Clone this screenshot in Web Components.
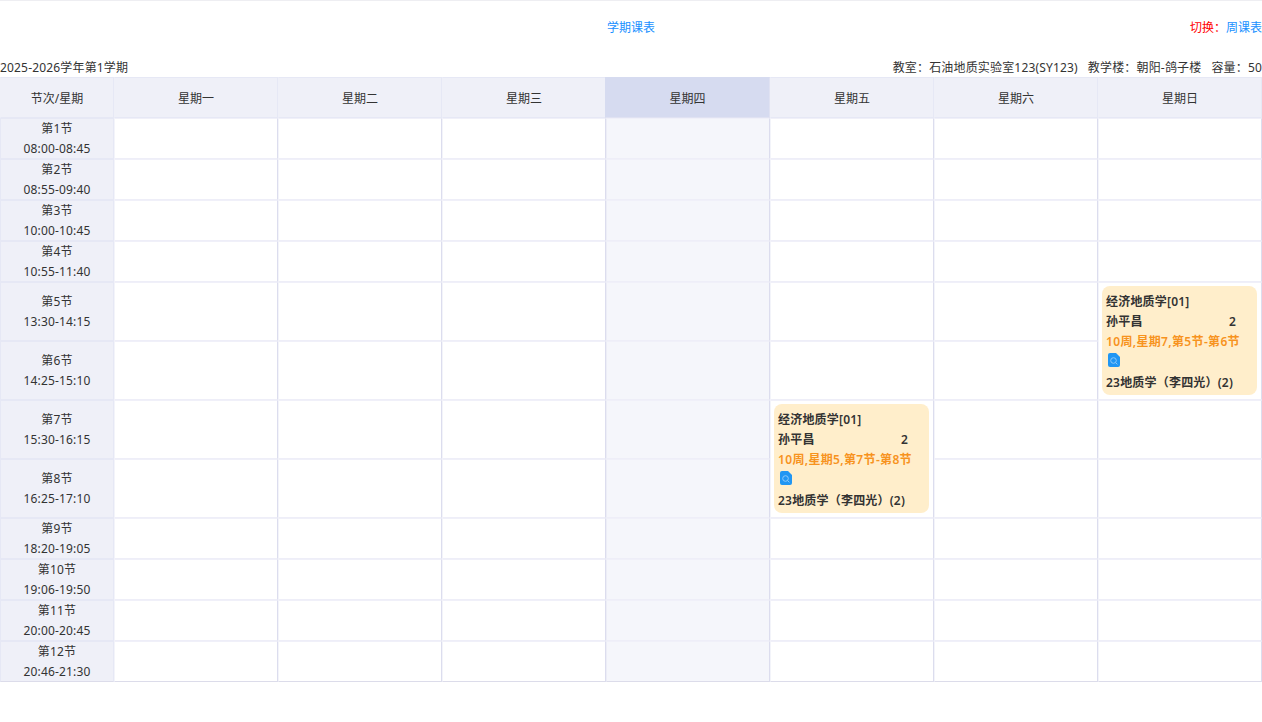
<!DOCTYPE html>
<html lang="zh">
<head>
<meta charset="utf-8">
<title>学期课表</title>
<style>
    html, body { margin: 0; padding: 0; background: #fff; }
    body { font: 12px/20px "Noto Sans", "Noto Sans CJK SC", sans-serif; color: #333; }
</style>
</head>
<body>
<term-page></term-page>
<script>
const SLOTS = [
    ['第1节', '08:00-08:45'], ['第2节', '08:55-09:40'], ['第3节', '10:00-10:45'], ['第4节', '10:55-11:40'],
    ['第5节', '13:30-14:15'], ['第6节', '14:25-15:10'], ['第7节', '15:30-16:15'], ['第8节', '16:25-17:10'],
    ['第9节', '18:20-19:05'], ['第10节', '19:06-19:50'], ['第11节', '20:00-20:45'], ['第12节', '20:46-21:30']
];
const DAYS = ['星期一', '星期二', '星期三', '星期四', '星期五', '星期六', '星期日'];
const TODAY = 4;
const COURSES = [
    { day: 5, from: 7, to: 8, week: '10周,星期5,第7节-第8节' },
    { day: 7, from: 5, to: 6, week: '10周,星期7,第5节-第6节' }
];

class TermHeader extends HTMLElement {
    connectedCallback() {
        this.attachShadow({ mode: 'open' });
        this.shadowRoot.innerHTML = `
            <style>
                :host { display: block; border-top: 1px solid #eeeef2; }
                .bar { display: grid; grid-template-columns: 1fr auto 1fr; height: 54px; align-items: center; color: #1890ff; }
                .switch { justify-self: end; }
                .switch span { color: #f00; }
                .info { display: flex; justify-content: space-between; box-sizing: border-box; height: 22px; padding-top: 4px; align-items: center; letter-spacing: .17px; }
                .info div span { margin-left: 10px; }
            </style>
            <div class="bar">
                <div></div>
                <div>学期课表</div>
                <div class="switch"><span>切换：</span>周课表</div>
            </div>
            <div class="info">
                <div>2025-2026学年第1学期</div>
                <div><span>教室：石油地质实验室123(SY123)</span><span>教学楼：朝阳-鸽子楼</span><span>容量：50</span></div>
            </div>
        `;
    }
}

class TimeGrid extends HTMLElement {
    connectedCallback() {
        this.attachShadow({ mode: 'open' });
        this.shadowRoot.innerHTML = `
            <style>
                :host { display: block; }
                .grid {
                    display: grid;
                    grid-template-columns: 114px repeat(7, 164px);
                    grid-template-rows: 41px repeat(4, 41px) repeat(4, 59px) repeat(4, 41px);
                }
            </style>
            <div class="grid"><slot></slot></div>
        `;
    }
}

class GridCell extends HTMLElement {
    connectedCallback() {
        this.attachShadow({ mode: 'open' });
        this.shadowRoot.innerHTML = `
            <style>
                :host {
                    display: flex;
                    box-sizing: border-box;
                    min-width: 0;
                    border-top: 1px solid #f0f0f9;
                    border-left: 1px solid #f3f4fa;
                    border-right: 1px solid #dcddee;
                    border-bottom: 1px solid #eeeef8;
                    background: #fff;
                }
                :host([kind="head"]), :host([kind="today-head"]) {
                    padding-top: 2px;
                    background: #eff0f8;
                    border-color: #e6e8f5;
                    border-left-color: transparent;
                    align-items: center;
                    justify-content: center;
                }
                :host([kind="today-head"]) { margin-left: -1px; background: #d6dbf0; border-color: #d6dbf0 #e0e2f2 #e0e2f2 #d6dbf0; }
                :host([kind="side"]) {
                    padding-top: 1px;
                    background: #eff0f8;
                    border-color: #e6e8f5;
                    flex-direction: column;
                    align-items: center;
                    justify-content: center;
                    text-align: center;
                    letter-spacing: .17px;
                }
                :host([kind="today"]) { background: #f5f6fb; border-left-color: #eceDf6; }
                :host([last]) { border-bottom-color: #dcdcea; }
            </style>
            <slot></slot>
        `;
    }
}

class CourseCard extends HTMLElement {
    connectedCallback() {
        const week = this.getAttribute('week');
        this.attachShadow({ mode: 'open' });
        this.shadowRoot.innerHTML = `
            <style>
                :host {
                    display: block;
                    flex: 1;
                    margin: 3px 4px 4px 3px;
                    padding: 6px 4px 2px;
                    border-radius: 8px;
                    background: #ffeecb;
                    color: #333;
                    font-weight: 600;
                    letter-spacing: .2px;
                }
                .row { display: flex; justify-content: space-between; padding-right: 17px; }
                .week { color: #f7931e; white-space: nowrap; letter-spacing: .34px; }
                .doc { height: 21px; display: flex; align-items: flex-start; padding: 1px 0 0 2px; box-sizing: border-box; }
                svg { display: block; }
            </style>
            <div>经济地质学[01]</div>
            <div class="row"><span>孙平昌</span><span>2</span></div>
            <div class="week">${week}</div>
            <div class="doc">
                <svg width="12" height="14" viewBox="0 0 12 14">
                    <path d="M2 0H8L12 4V12A2 2 0 0 1 10 14H2A2 2 0 0 1 0 12V2A2 2 0 0 1 2 0Z" fill="#2196f3"/>
                    <circle cx="5.5" cy="7.5" r="2.8" fill="none" stroke="#8cc9fa" stroke-width="1"/>
                    <path d="M7.6 9.6L9.4 11.4" stroke="#8cc9fa" stroke-width="1"/>
                </svg>
            </div>
            <div>23地质学（李四光）(2)</div>
        `;
    }
}

class TermPage extends HTMLElement {
    connectedCallback() {
        this.attachShadow({ mode: 'open' });
        const cell = (kind, col, row, span, html) =>
            `<grid-cell ${kind ? `kind="${kind}"` : ''} ${row === 13 ? 'last' : ''} style="grid-column:${col};grid-row:${row} / span ${span}">${html || ''}</grid-cell>`;

        let cells = cell('head', 1, 1, 1, '节次/星期');
        DAYS.forEach((d, i) => {
            cells += cell(i + 1 === TODAY ? 'today-head' : 'head', i + 2, 1, 1, d);
        });
        SLOTS.forEach((s, r) => {
            cells += cell('side', 1, r + 2, 1, `<div>${s[0]}</div><div>${s[1]}</div>`);
            DAYS.forEach((d, i) => {
                const day = i + 1, no = r + 1;
                const course = COURSES.find(c => c.day === day && no >= c.from && no <= c.to);
                if (course && no !== course.from) return;
                const span = course ? course.to - course.from + 1 : 1;
                const card = course ? `<course-card week="${course.week}"></course-card>` : '';
                cells += cell(day === TODAY ? 'today' : '', i + 2, r + 2, span, card);
            });
        });

        this.shadowRoot.innerHTML = `
            <style>
                :host { display: block; width: 1262px; }
            </style>
            <term-header></term-header>
            <time-grid>${cells}</time-grid>
        `;
    }
}

customElements.define('term-header', TermHeader);
customElements.define('time-grid', TimeGrid);
customElements.define('grid-cell', GridCell);
customElements.define('course-card', CourseCard);
customElements.define('term-page', TermPage);
</script>
</body>
</html>
